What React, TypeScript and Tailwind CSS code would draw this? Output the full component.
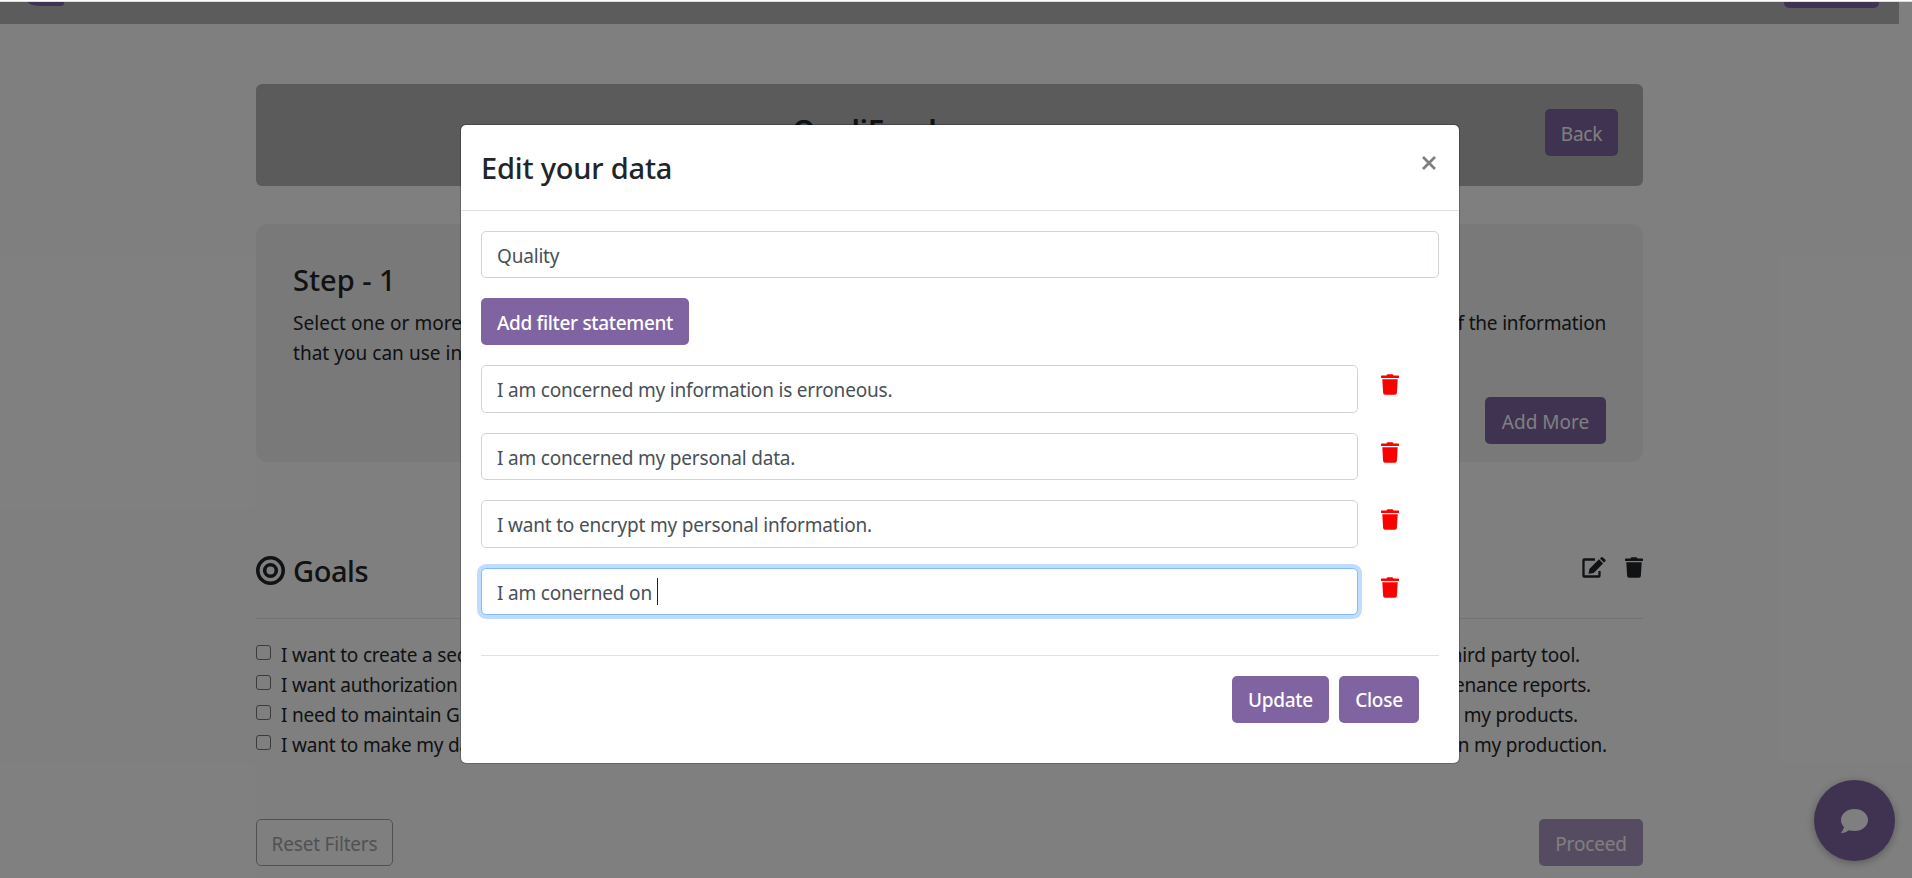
import React from 'react';

const statements = [
  'I am concerned my information is erroneous.',
  'I am concerned my personal data.',
  'I want to encrypt my personal information.',
];

const goals = [
  { left: 'I want to create a secure', right: 'third party tool.', pad: 'pr-[63px]' },
  { left: 'I want authorization', right: 'maintenance reports.', pad: 'pr-[52px]' },
  { left: 'I need to maintain GDPR', right: 'my products.', pad: 'pr-[65px]' },
  { left: 'I want to make my data', right: 'in my production.', pad: 'pr-[36px]' },
];

const Trash = ({ className = '' }: { className?: string }) => (
  <svg viewBox="0 0 448 512" className={className} fill="currentColor">
    <path d="M432 32H312l-9.4-18.7A24 24 0 0 0 281.1 0H166.8a23.7 23.7 0 0 0-21.4 13.3L136 32H16A16 16 0 0 0 0 48v32a16 16 0 0 0 16 16h416a16 16 0 0 0 16-16V48a16 16 0 0 0-16-16zM53.2 467a48 48 0 0 0 47.9 45h245.8a48 48 0 0 0 47.9-45L416 128H32z" />
  </svg>
);

const Edit = () => (
  <svg viewBox="0 0 24 21" className="h-[21px] w-6" fill="currentColor">
    <path d="M13 2.500H2.200Q1.500 2.500 1.500 3.200V18.800Q1.500 19.500 2.200 19.500H16.800Q17.500 19.500 17.500 18.800V14" fill="none" stroke="currentColor" strokeWidth="2.300" />
    <path d="M17 2.300l4.100 4.100L11.700 15.900l-4.500.9q-.7.100-.6-.6l.9-4.500zM17.900 1.500l1.200-1.100q.9-.8 1.800 0l2.300 2.200q.8.900 0 1.800l-1.200 1.200z" />
  </svg>
);

const Button = ({ children, className }: { children: React.ReactNode; className: string }) => (
  <button className={`flex h-[47px] shrink-0 items-center justify-center rounded-[5px] bg-[#8064a2] pt-[3px] whitespace-nowrap ${className}`}>
    {children}
  </button>
);

function Page() {
  return (
    <div className="flex h-full flex-col">
      <header className="flex h-[22px] w-[1899px] shrink-0 items-start justify-between bg-[#b8b8b8] pr-5 pl-7">
        <div className="h-1 w-9 rounded-br-[3px] rounded-bl-[14px_4px] bg-[#8064a2]" />
        <div className="h-1.5 w-[95px] rounded-b-[5px] bg-[#8064a2]" />
      </header>
      <main className="mt-[60px] ml-64 w-[1387px]">
        <section className="flex h-[102px] rounded-[6px] bg-[#b6b6b6] pr-[25px] pl-[536px]">
          <h1 className="mt-[22px] flex-1 text-[30px] leading-[50px] font-semibold tracking-[-0.010em]">QualiFeed</h1>
          <Button className="mt-[25px] w-[73px] text-white">Back</Button>
        </section>
        <section className="mt-[38px] h-[238px] rounded-[12px] bg-[#f2f2f2] pt-[38px] pr-[37px] pl-[37px]">
          <h2 className="text-[29px] leading-9 font-medium tracking-normal">Step - 1</h2>
          <div className="mt-[10px] flex justify-between leading-[30px]">
            <p className="w-[240px] tracking-[0.002em] whitespace-nowrap">Select one or more<br />that you can use in</p>
            <p className="whitespace-nowrap">of the information</p>
          </div>
          <div className="mt-[29px] flex justify-end">
            <Button className="w-[121px] tracking-normal text-white">Add More</Button>
          </div>
        </section>
        <section className="mt-[92px]">
          <div className="flex h-[65px] items-start border-b border-black/10">
            <svg viewBox="0 0 29 29" className="mt-0.5 size-[29px]" fill="none" stroke="currentColor">
              <circle cx="14.500" cy="14.500" r="12.700" strokeWidth="3.600" />
              <circle cx="14.500" cy="14.500" r="5.800" strokeWidth="3.600" />
            </svg>
            <h2 className="-mt-px ml-2 flex-1 text-[29px] leading-9 font-medium tracking-[-0.015em]">Goals</h2>
            <div className="mt-[3px] flex items-center gap-[19px]">
              <Edit />
              <Trash className="h-[21px] w-[18px]" />
            </div>
          </div>
          <ul className="mt-[21px]">
            {goals.map((g) => (
              <li key={g.left} className={`flex h-[30px] items-center leading-[30px] ${g.pad}`}>
                <span className="-mt-[5px] size-[15px] rounded-[3px] border border-[#767676] bg-white" />
                <span className="ml-2.5 flex-1 whitespace-nowrap">{g.left}</span>
                <span className="whitespace-nowrap">{g.right}</span>
              </li>
            ))}
          </ul>
        </section>
        <div className="mt-[59px] flex justify-between">
          <button className="flex h-[47px] w-[137px] items-center justify-center rounded-[5px] border border-[#6c757d] pt-[3px] whitespace-nowrap text-[#6c757d] opacity-65">
            Reset Filters
          </button>
          <Button className="w-[104px] text-white opacity-65">Proceed</Button>
        </div>
      </main>
    </div>
  );
}

const field = 'flex items-center rounded-[5px] border bg-white pt-[3px] pl-[15px] text-[#495057] whitespace-pre';

function Modal() {
  return (
    <div className="absolute top-[124px] left-[460px] h-[640px] w-[1000px] rounded-[6px] border border-black/20 bg-white bg-clip-padding">
      <div className="flex h-[86px] items-start justify-between border-b border-[#dee2e6] px-5 pt-[25px]">
        <h2 className="text-[29px] leading-9 font-medium">Edit your data</h2>
        <svg viewBox="0 0 14 14" className="mt-[6px] mr-[3px] size-[14px] text-[#7f7f7f]" fill="none" stroke="currentColor" strokeWidth="2.700">
          <path d="M1 1l12 12M13 1L1 13" />
        </svg>
      </div>
      <div className="px-5 pt-5">
        <div className={`${field} h-[47px] border-[#ced4da]`}>Quality</div>
        <Button className="mt-5 w-[208px] font-medium tracking-[-0.018em] text-white">Add filter statement</Button>
        <div className="mt-5 flex flex-col gap-[20px]">
          {statements.map((s) => (
            <div key={s} className="flex h-[47.500px] items-start">
              <div className={`${field} h-[47.500px] w-[877px] border-[#ced4da] pt-1`}>{s}</div>
              <Trash className="mt-[9px] ml-[22.500px] h-[21px] w-[18px] text-[#ff0000]" />
            </div>
          ))}
          <div className="flex h-[47.500px] items-start">
            <div className={`${field} h-[47.500px] w-[877px] border-[#80bdff] shadow-[0_0_0_4px_#bfdeff]`}>
              I am conerned on<span className="-mt-0.5 ml-[5px] h-[27px] w-px bg-[#212529]" />
            </div>
            <Trash className="mt-[9px] ml-[22.500px] h-[21px] w-[18px] text-[#ff0000]" />
          </div>
        </div>
        <div className="mt-[39.500px] flex justify-end gap-2.5 border-t border-[#dee2e6] pt-5 pr-5">
          <Button className="w-[97px] pt-1 font-medium tracking-[-0.015em] text-white">Update</Button>
          <Button className="w-20 pt-1 font-medium tracking-[-0.015em] text-white">Close</Button>
        </div>
      </div>
    </div>
  );
}

export default function App() {
  return (
    <div className="relative flex h-[878px] w-[1912px] flex-col overflow-hidden bg-white font-['Noto_Sans','Open_Sans',sans-serif] text-[19px] tracking-[-0.010em] text-[#212529]">
      <div className="h-0.5 shrink-0 border-b border-[#dadce0]" />
      <div className="min-h-0 flex-1"><Page /></div>
      <div className="absolute top-[780px] left-[1814px] flex size-[81px] items-center justify-center rounded-full bg-[#8064a2] text-white shadow-[0_2px_8px_rgba(0,0,0,0.300)]">
        <svg viewBox="0 0 27 24" className="h-6 w-[27px]" fill="currentColor">
          <path d="M13.500 0C6 0 0 4.900 0 11c0 2.600 1.100 5 3 6.900C2.700 20.500.7 22.800.2 23.400c-.2.200-.1.600.3.600 3.500 0 6.100-1.700 7.400-2.700 1.700.5 3.600.8 5.600.8C21 22.100 27 17.100 27 11S21 0 13.500 0z" />
        </svg>
      </div>
      <div className="absolute inset-x-0 top-0.5 bottom-0 bg-black/50" />
      <Modal />
    </div>
  );
}
